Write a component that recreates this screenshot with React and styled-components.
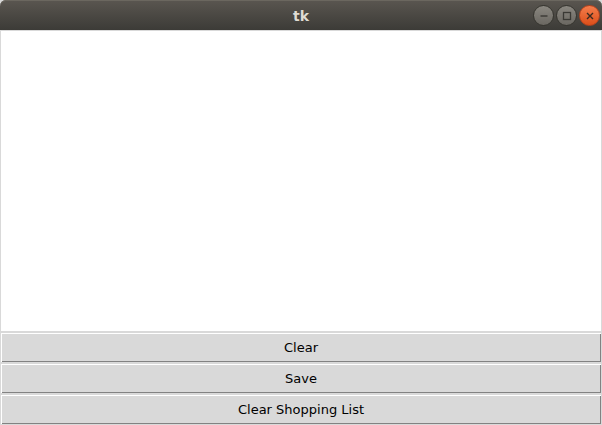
import React from 'react';
import styled, { createGlobalStyle } from 'styled-components';

const GlobalStyle = createGlobalStyle`
    html, body {
        margin: 0;
        padding: 0;
        background: #d9d9d9;
        overflow: hidden;
    }
`;

const Window = styled.div`
    width: 602px;
    height: 425px;
    display: flex;
    flex-direction: column;
    background: #d9d9d9;
`;

const TitleBar = styled.div`
    height: 30px;
    flex: none;
    display: flex;
    align-items: center;
    justify-content: center;
    position: relative;
    border-radius: 6px 6px 0 0;
    background: linear-gradient(#5a5650, #3c3b37);
    box-shadow: inset 0 1px 0 #6b675f;
`;

const Title = styled.span`
    font-family: "DejaVu Sans", sans-serif;
    font-weight: bold;
    font-size: 14px;
    color: #dfdbd2;
    padding-top: 1px;
`;

const Controls = styled.div`
    position: absolute;
    right: 2px;
    top: 5px;
    display: flex;
    gap: 2px;
`;

const Control = styled.div`
    width: 19px;
    height: 19px;
    border-radius: 50%;
    display: flex;
    align-items: center;
    justify-content: center;
    border: 1px solid ${p => (p.$close ? '#b8421c' : '#36352f')};
    background: ${p =>
        p.$close
            ? 'linear-gradient(#f47d4c, #dc4f1a)'
            : 'linear-gradient(#8a8780, #6a6761)'};
`;

const Canvas = styled.div`
    height: 300px;
    flex: none;
    background: #ffffff;
    border: 1px solid #d9d9d9;
`;

const Button = styled.button`
    height: 31px;
    flex: none;
    margin: 0;
    padding: 0 0 1px;
    background: #d9d9d9;
    border: 1px solid #d9d9d9;
    outline: none;
    box-shadow: inset 1px 1px 0 #ffffff, inset -1px -1px 0 #828282;
    font-family: "DejaVu Sans", sans-serif;
    font-size: 13px;
    color: #000000;
    text-align: center;
`;

const App = () => (
    <>
        <GlobalStyle />
        <Window>
            <TitleBar>
                <Title>tk</Title>
                <Controls>
                    <Control>
                        <svg width="10" height="10" viewBox="0 0 10 10">
                            <path d="M1.5 5h7" stroke="#3a3934" strokeWidth="1.4" />
                        </svg>
                    </Control>
                    <Control>
                        <svg width="10" height="10" viewBox="0 0 10 10">
                            <rect x="1.5" y="1.5" width="7" height="7" fill="none" stroke="#3a3934" strokeWidth="1.3" />
                        </svg>
                    </Control>
                    <Control $close>
                        <svg width="10" height="10" viewBox="0 0 10 10">
                            <path d="M2 2l6 6M8 2l-6 6" stroke="#3a2a20" strokeWidth="1.4" />
                        </svg>
                    </Control>
                </Controls>
            </TitleBar>
            <Canvas />
            <Button>Clear</Button>
            <Button>Save</Button>
            <Button>Clear Shopping List</Button>
        </Window>
    </>
);

export default App;
